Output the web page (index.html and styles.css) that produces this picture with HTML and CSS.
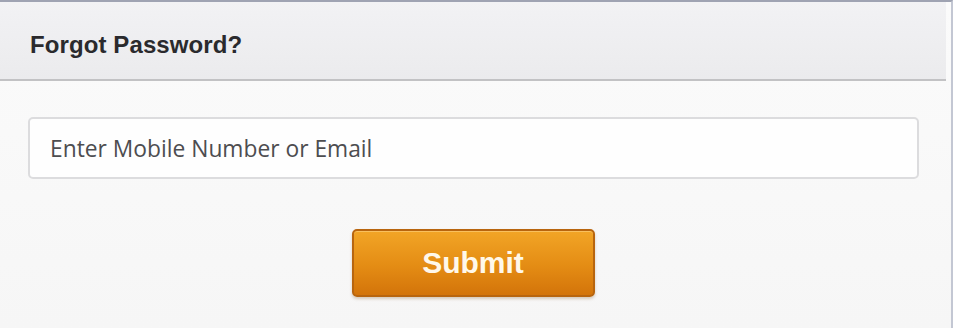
FILE: index.html
```html
<!DOCTYPE html>
<html>
<head>
<meta charset="utf-8">
<link rel="stylesheet" href="styles.css">
</head>
<body>
<div class="panel">
  <div class="header">
    <h1 class="title">Forgot Password?</h1>
  </div>
  <div class="body">
    <div class="field">
      <input class="input" type="text" placeholder="Enter Mobile Number or Email">
    </div>
    <div class="actions">
      <button class="submit" type="button">Submit</button>
    </div>
  </div>
</div>
</body>
</html>
```
FILE: styles.css
```css
html, body {
  margin: 0;
  padding: 0;
  background: #f8f8f8;
}
body {
  width: 953px;
  height: 328px;
  overflow: hidden;
  font-family: "Liberation Sans", Arial, sans-serif;
}
.panel {
  box-sizing: border-box;
  width: 953px;
  height: 328px;
  border-top: 2px solid #9fa3b2;
  border-right: 2px solid #c3c7d3;
  background: linear-gradient(#fbfbfb, #f6f6f6);
}
.header {
  box-sizing: border-box;
  height: 79px;
  margin-right: 5px;
  background: linear-gradient(#f2f2f4, #ebebed);
  border-bottom: 2px solid #c2c2c4;
  display: flex;
  align-items: center;
  padding-left: 30px;
  padding-top: 8px;
}
.title {
  margin: 0;
  font-size: 24px;
  font-weight: bold;
  color: #2a2a2d;
  letter-spacing: 0.1px;
}
.body {
  padding: 36px 32px 0 28px;
}
.field {
  display: flex;
}
.input {
  box-sizing: border-box;
  width: 891px;
  height: 62px;
  border: 2px solid #dcdcde;
  border-radius: 5px;
  background: #fefefe;
  padding: 0 0 0 20px;
  font-family: "Open Sans", sans-serif;
  font-size: 22.8px;
  color: #4a4a4c;
  outline: none;
}
.input::placeholder {
  color: #4d4d50;
  opacity: 1;
}
.actions {
  display: flex;
  justify-content: center;
  margin-top: 50px;
  padding-right: 1px;
}
.submit {
  box-sizing: border-box;
  width: 243px;
  height: 68px;
  border: 2px solid #b8650e;
  border-radius: 5px;
  background: linear-gradient(#f2a526, #e48c14 55%, #d3740a);
  box-shadow: 0 2px 3px rgba(120, 70, 10, 0.25), inset 0 1px 0 rgba(255, 220, 150, 0.5);
  color: #fff8ea;
  font-family: "Liberation Sans", Arial, sans-serif;
  font-weight: bold;
  font-size: 30px;
  padding: 0;
  cursor: pointer;
}
```
